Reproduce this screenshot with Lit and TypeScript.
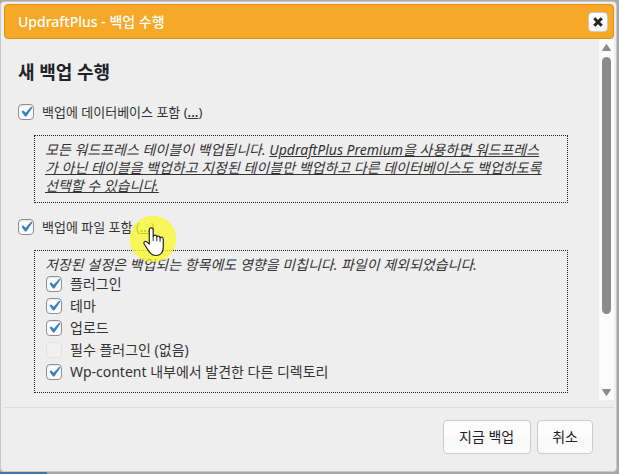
import { LitElement, html, css } from "lit";
import { customElement } from "lit/decorators.js";

interface FileItem {
  id: string;
  label: string;
  disabled?: boolean;
}

const FILE_ITEMS: FileItem[] = [
  { id: "plugins", label: "플러그인" },
  { id: "themes", label: "테마" },
  { id: "uploads", label: "업로드" },
  { id: "mu-plugins", label: "필수 플러그인 (없음)", disabled: true },
  { id: "others", label: "Wp-content 내부에서 발견한 다른 디렉토리" },
];

@customElement("app-root")
export class AppRoot extends LitElement {
  static styles = css`
    :host {
      display: flex;
      box-sizing: border-box;
      height: 100vh;
      padding: 1px 2px 2px 0;
      background: linear-gradient(to right, #4577a6 47px, #a6a6a6 47px) bottom / 100% 2px no-repeat, #a8a8a8;
      color: #333;
      font-family: "Noto Sans", "Noto Sans CJK KR", sans-serif;
      font-size: 14px;
      line-height: 18px;
    }
    * {
      box-sizing: border-box;
    }
    .dialog {
      flex: 1;
      min-width: 0;
      display: flex;
      flex-direction: column;
      padding: 2px 2px 3px 3px;
      border: 1px solid #c8c8c8;
      border-radius: 4px;
      background: #eee;
    }
    .titlebar {
      display: flex;
      align-items: center;
      justify-content: space-between;
      height: 35px;
      flex: none;
      padding: 0 5px 0 13px;
      border: 1px solid #e78f08;
      border-radius: 4px;
      background: #f6a828;
      color: #fff;
    }
    .title {
      margin: 0;
      font-size: 14px;
      font-weight: 500;
    }
    .close {
      display: flex;
      align-items: center;
      justify-content: center;
      width: 20px;
      height: 20px;
      padding: 0;
      border: 1px solid #ccc;
      border-radius: 4px;
      background: linear-gradient(#fff 50%, #f6f6f6 50%);
    }
    .body {
      flex: 1;
      min-height: 0;
      display: flex;
      margin-bottom: 7px;
    }
    .content {
      flex: 1;
      min-width: 0;
      overflow: hidden;
      padding: 21px 31px 0 14px;
    }
    .heading {
      margin: 0 0 18px;
      color: #1d2327;
      font-size: 18px;
      line-height: 24px;
      font-weight: 700;
    }
    .option {
      display: flex;
      align-items: center;
      gap: 8px;
      height: 20px;
      font-size: 13px;
    }
    .check {
      appearance: none;
      flex: none;
      width: 16px;
      height: 16px;
      margin: 0;
      border: 1px solid #8c8f94;
      border-radius: 4px;
      background-color: #fff;
      box-shadow: inset 0 1px 2px rgba(0, 0, 0, 0.1);
    }
    .check:checked {
      background-image: url("data:image/svg+xml;utf8,%3Csvg xmlns='http://www.w3.org/2000/svg' viewBox='0 0 20 20'%3E%3Cpath d='M14.83 4.89l1.34.94-5.81 8.38H9.02L5.78 9.67l1.34-1.25 2.57 2.4z' fill='%233582c4'/%3E%3C/svg%3E");
      background-size: 21px 21px;
      background-position: center;
    }
    .check:disabled {
      border-color: #e0e1e2;
      background-color: #f1f1f1;
      box-shadow: none;
    }
    .link {
      color: inherit;
      text-decoration: underline;
    }
    .more {
      font-weight: 600;
    }
    .panel {
      margin: 13px 0 14px 16px;
      padding: 5px 10px 7px;
      border: 1px dotted #222;
    }
    .note {
      margin: 0;
      font-style: italic;
    }
    .items {
      display: flex;
      flex-direction: column;
      margin: -1px 0 0;
      padding: 0 0 2px;
      list-style: none;
    }
    .item {
      display: flex;
      align-items: center;
      gap: 8px;
      height: 22px;
      padding-left: 1px;
    }
    .anchor {
      position: relative;
    }
    .pointer {
      position: absolute;
      left: -7px;
      top: -3px;
      width: 48px;
      height: 48px;
      pointer-events: none;
    }
    .scrollbar {
      flex: none;
      width: 15px;
      display: flex;
      flex-direction: column;
      align-items: center;
      padding: 5px 0 4px;
      background: #fcfcfc;
    }
    .arrow {
      flex: none;
      display: block;
    }
    .track {
      flex: 1;
      width: 9px;
      margin: 6px 0 7px;
    }
    .thumb {
      height: 79%;
      border-radius: 5px;
      background: #8b8b8b;
    }
    .footer {
      flex: none;
      display: flex;
      justify-content: flex-end;
      gap: 6px;
      padding: 12px 21px 14px;
      border-top: 1px solid #ddd;
    }
    .button {
      height: 34px;
      padding: 0 14px;
      border: 1px solid #ccc;
      border-radius: 4px;
      background: linear-gradient(#fcfcfc 50%, #f8f8f8 50%, #fbfbfb);
      color: #222;
      font: inherit;
    }
    .primary {
      padding: 0 16px 0 15px;
    }
  `;

  render() {
    return html`
      <section class="dialog" role="dialog" aria-labelledby="dialog-title">
        <header class="titlebar">
          <h1 class="title" id="dialog-title">UpdraftPlus - 백업 수행</h1>
          <button class="close" type="button" aria-label="닫기">
            <svg width="10" height="10" viewBox="0 0 10 10" aria-hidden="true">
              <path d="M1.3 1.3L8.7 8.7M8.7 1.3L1.3 8.7" stroke="#222" stroke-width="3" fill="none" />
            </svg>
          </button>
        </header>
        <div class="body">
          <main class="content">
            <h2 class="heading">새 백업 수행</h2>
            <div class="option">
              <input class="check" type="checkbox" id="include-db" checked />
              <span>
                <label for="include-db">백업에 데이터베이스 포함</label>
                (<a class="link more" href="#database">...</a>)
              </span>
            </div>
            <div class="panel" id="database">
              <p class="note">
                모든 워드프레스 테이블이 백업됩니다.
                <a class="link" href="#premium"
                  >UpdraftPlus Premium을 사용하면 워드프레스<br />가 아닌 테이블을 백업하고 지정된 테이블만 백업하고 다른 데이터베이스도 백업하도록<br />선택할 수 있습니다.</a
                >
              </p>
            </div>
            <div class="option">
              <input class="check" type="checkbox" id="include-files" checked />
              <span>
                <label for="include-files">백업에 파일 포함</label>
                <span class="anchor"
                  >(<a class="link more" href="#files">...</a>)${this.renderPointer()}</span
                >
              </span>
            </div>
            <div class="panel" id="files">
              <p class="note">저장된 설정은 백업되는 항목에도 영향을 미칩니다. 파일이 제외되었습니다.</p>
              <ul class="items">
                ${FILE_ITEMS.map(
                  (item) => html`
                    <li class="item">
                      <input
                        class="check"
                        type="checkbox"
                        id=${item.id}
                        ?checked=${!item.disabled}
                        ?disabled=${item.disabled}
                      />
                      <label for=${item.id}>${item.label}</label>
                    </li>
                  `,
                )}
              </ul>
            </div>
          </main>
          <div class="scrollbar" aria-hidden="true">
            <svg class="arrow" width="9" height="7" viewBox="0 0 9 7">
              <path d="M4.5 0.5L8.5 6.5H0.5Z" fill="#8b8b8b" stroke="#8b8b8b" stroke-linejoin="round" />
            </svg>
            <div class="track"><div class="thumb"></div></div>
            <svg class="arrow" width="9" height="7" viewBox="0 0 9 7">
              <path d="M4.5 6.5L8.5 0.5H0.5Z" fill="#8b8b8b" stroke="#8b8b8b" stroke-linejoin="round" />
            </svg>
          </div>
        </div>
        <footer class="footer">
          <button class="button primary" type="button">지금 백업</button>
          <button class="button" type="button">취소</button>
        </footer>
      </section>
    `;
  }

  private renderPointer() {
    return html`
      <svg class="pointer" viewBox="0 0 48 48" aria-hidden="true">
        <circle cx="24" cy="24" r="23.3" fill="#fafa28" fill-opacity="0.75" />
        <g transform="translate(-3.3 -3.7) scale(1.15)" stroke="#222" stroke-linejoin="round">
          <path
            d="M20.5 28.5V16.2c0-2.4 3.4-2.4 3.4 0v5.6c.5-1.6 3-1.4 3.1.5.6-1.3 2.8-1 2.9.8.7-1.1 2.8-.7 2.8 1.2v6.2c0 5-2.2 7.9-6.6 7.9-3.3 0-4.7-1.5-6.3-4.2l-3.6-5.5c-1.2-2 .9-3.3 2.3-2.1z"
            fill="#fff"
            stroke-width="1"
          />
          <path d="M23.9 21.5v4.4M27 22.3v3.8M29.9 23.1v3.4" stroke-width="0.8" fill="none" />
        </g>
      </svg>
    `;
  }
}
